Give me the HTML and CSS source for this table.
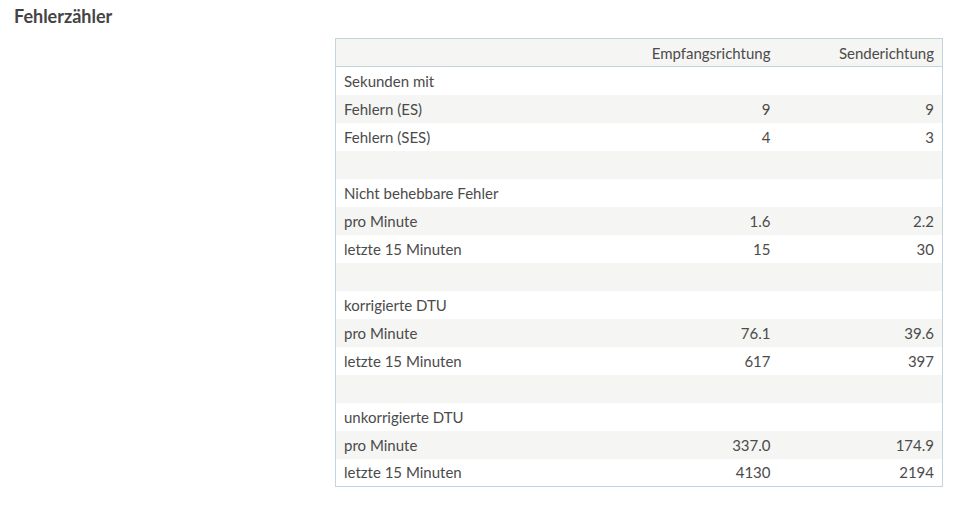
FILE: index.html
```html
<!DOCTYPE html>
<html lang="de">
<head>
    <meta charset="UTF-8">
    <title>Fehlerzähler</title>
    <link rel="stylesheet" href="styles.css">
</head>
<body>
    <div class="page">
        <h3 class="title">Fehlerzähler</h3>
        <div class="content">
            <table class="counters">
                <colgroup>
                    <col>
                    <col class="col-rx">
                    <col class="col-tx">
                </colgroup>
                <thead>
                    <tr><th></th><th class="num">Empfangsrichtung</th><th class="num">Senderichtung</th></tr>
                </thead>
                <tbody>
                    <tr><td>Sekunden mit</td><td></td><td></td></tr>
                    <tr><td>Fehlern (ES)</td><td class="num">9</td><td class="num">9</td></tr>
                    <tr><td>Fehlern (SES)</td><td class="num">4</td><td class="num">3</td></tr>
                    <tr><td>&nbsp;</td><td></td><td></td></tr>
                    <tr><td>Nicht behebbare Fehler</td><td></td><td></td></tr>
                    <tr><td>pro Minute</td><td class="num">1.6</td><td class="num">2.2</td></tr>
                    <tr><td>letzte 15 Minuten</td><td class="num">15</td><td class="num">30</td></tr>
                    <tr><td>&nbsp;</td><td></td><td></td></tr>
                    <tr><td>korrigierte DTU</td><td></td><td></td></tr>
                    <tr><td>pro Minute</td><td class="num">76.1</td><td class="num">39.6</td></tr>
                    <tr><td>letzte 15 Minuten</td><td class="num">617</td><td class="num">397</td></tr>
                    <tr><td>&nbsp;</td><td></td><td></td></tr>
                    <tr><td>unkorrigierte DTU</td><td></td><td></td></tr>
                    <tr><td>pro Minute</td><td class="num">337.0</td><td class="num">174.9</td></tr>
                    <tr><td>letzte 15 Minuten</td><td class="num">4130</td><td class="num">2194</td></tr>
                </tbody>
            </table>
        </div>
    </div>
</body>
</html>
```

FILE: styles.css
```css
* {
    margin: 0;
    padding: 0;
    box-sizing: border-box;
}
body {
    font-family: Lato, "Open Sans", sans-serif;
    color: #4b4b4b;
    background-color: #fff;
}
.page {
    padding: 6px 0 20px 14px;
}
.title {
    font-size: 18px;
    font-weight: bold;
    color: #444;
    line-height: 20px;
}
.content {
    display: flex;
    padding-left: 321px;
    margin-top: 12px;
}
.counters {
    width: 608px;
    flex-shrink: 0;
    border-collapse: collapse;
    border: 1px solid #c5d3de;
    font-size: 15px;
}
.col-rx {
    width: 200px;
}
.col-tx {
    width: 164px;
}
.counters th,
.counters td {
    height: 28px;
    padding: 0 8px;
    text-align: left;
    font-weight: normal;
    white-space: nowrap;
}
.counters thead th {
    height: 28px;
    background-color: #f5f5f3;
    border-bottom: 1px solid #c5d3de;
}
.counters tbody tr:nth-child(even) td {
    background-color: #f5f5f3;
}
.counters .num {
    text-align: right;
}
```
